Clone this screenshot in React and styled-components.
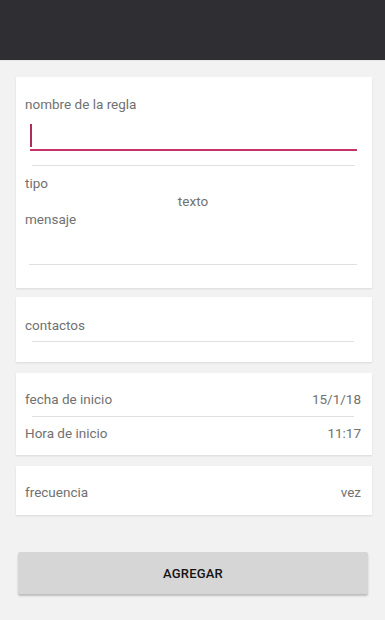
import React from 'react';
import styled, { createGlobalStyle } from 'styled-components';

const GlobalStyle = createGlobalStyle`
  html, body {
    margin: 0;
    padding: 0;
    background-color: #f2f2f2;
    font-family: Roboto, "Liberation Sans", sans-serif;
  }
`;

const Page = styled.div`
  width: 385px;
  min-height: 620px;
  background-color: #f2f2f2;
  display: flex;
  flex-direction: column;
`;

const TopBar = styled.header`
  height: 60px;
  background-color: #2f2e33;
  border-bottom: 1px solid #e8e8e8;
`;

const Content = styled.main`
  padding: 16px 13px 20px 16px;
  display: flex;
  flex-direction: column;
`;

const Card = styled.section`
  background-color: #ffffff;
  box-shadow: 0 1px 2px rgba(0, 0, 0, 0.1);
  display: flex;
  flex-direction: column;
  margin-top: ${(p) => p.$top || 0}px;
  padding-top: ${(p) => p.$pt}px;
  padding-bottom: ${(p) => p.$pb}px;
`;

const Label = styled.div`
  font-size: 13.5px;
  line-height: 17px;
  color: #717171;
  padding: 0 11px 0 9px;
  margin-top: ${(p) => p.$top || 0}px;
  text-align: ${(p) => (p.$center ? 'center' : 'left')};
`;

const Row = styled.div`
  display: flex;
  justify-content: space-between;
  font-size: 13.5px;
  line-height: 17px;
  color: #717171;
  padding: 0 11px 0 9px;
  margin-top: ${(p) => p.$top || 0}px;
`;

const InputBox = styled.div`
  height: 25px;
  margin: 11px 15px 0 14px;
  border-bottom: 2px solid #c4336a;
  display: flex;
`;

const Cursor = styled.span`
  width: 2px;
  height: 23px;
  background-color: #b02c5c;
`;

const Rule = styled.div`
  height: 1px;
  background-color: #e0e0e0;
  margin: ${(p) => p.$top}px ${(p) => p.$right}px 0 ${(p) => p.$left}px;
`;

const AddButton = styled.button`
  height: 42px;
  margin: 37px 4px 0 2px;
  border: none;
  border-radius: 2px;
  background-color: #d6d6d6;
  box-shadow: 0 2px 2px rgba(0, 0, 0, 0.22);
  font-family: Roboto, "Liberation Sans", sans-serif;
  font-size: 13px;
  font-weight: 500;
  letter-spacing: 0.2px;
  color: #141414;
`;

export default function App() {
  return (
    <Page>
      <GlobalStyle />
      <TopBar />
      <Content>
        <Card $pt={19} $pb={23}>
          <Label>nombre de la regla</Label>
          <InputBox>
            <Cursor />
          </InputBox>
          <Rule $top={14} $left={16} $right={17} />
          <Label $top={9}>tipo</Label>
          <Label $top={1} $center>texto</Label>
          <Label $top={1}>mensaje</Label>
          <Rule $top={36} $left={13} $right={15} />
        </Card>
        <Card $top={9} $pt={20} $pb={20}>
          <Label>contactos</Label>
          <Rule $top={7} $left={16} $right={18} />
        </Card>
        <Card $top={11} $pt={18} $pb={13}>
          <Row>
            <span>fecha de inicio</span>
            <span>15/1/18</span>
          </Row>
          <Rule $top={8} $left={16} $right={18} />
          <Row $top={8}>
            <span>Hora de inicio</span>
            <span>11:17</span>
          </Row>
        </Card>
        <Card $top={11} $pt={18} $pb={14}>
          <Row>
            <span>frecuencia</span>
            <span>vez</span>
          </Row>
        </Card>
        <AddButton>AGREGAR</AddButton>
      </Content>
    </Page>
  );
}
